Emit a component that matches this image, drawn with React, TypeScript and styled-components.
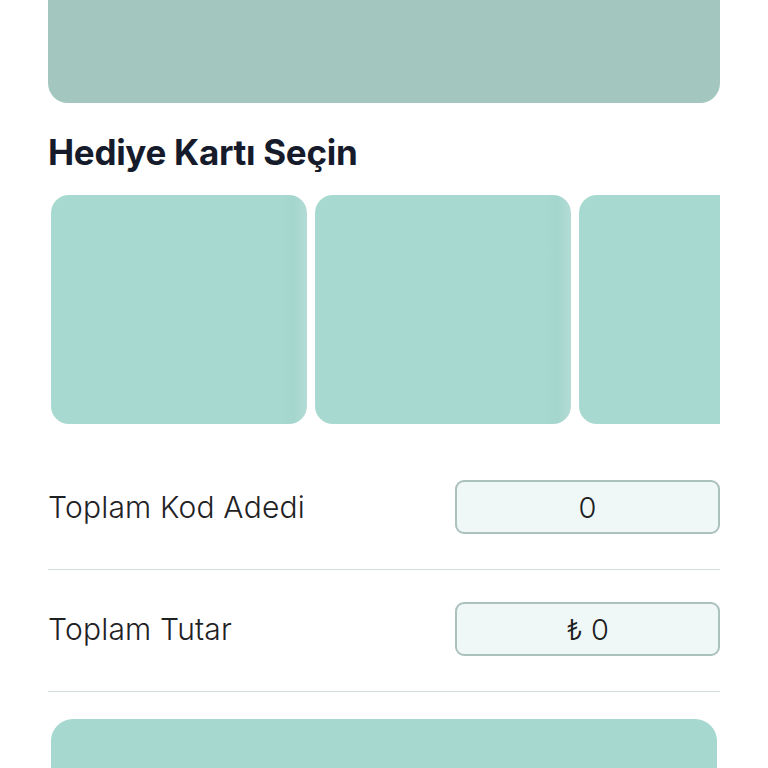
import styled, { createGlobalStyle } from 'styled-components';

const GlobalStyle = createGlobalStyle`
  body {
    margin: 0;
    background: #ffffff;
    font-family: Inter, "Noto Sans", sans-serif;
    color: #1b1f2a;
  }
`;

const cards = [1, 2, 3];

const rows = [
  { label: 'Toplam Kod Adedi', value: '0' },
  { label: 'Toplam Tutar', value: '₺ 0' },
];

export default function App() {
  return (
    <>
      <GlobalStyle />
      <Page>
        <Banner />
        <Title>Hediye Kartı Seçin</Title>
        <CardStrip>
          {cards.map((c) => (
            <GiftCard key={c} />
          ))}
        </CardStrip>
        <Summary>
          {rows.map((row) => (
            <SummaryRow key={row.label}>
              <Label>{row.label}</Label>
              <ValueBox>{row.value}</ValueBox>
            </SummaryRow>
          ))}
        </Summary>
        <SubmitButton />
      </Page>
    </>
  );
}

const Page = styled.div`
  padding: 0 48px;
  height: 768px;
  overflow: hidden;
  display: flex;
  flex-direction: column;
`;

const Banner = styled.div`
  height: 103px;
  flex-shrink: 0;
  background: #a3c7be;
  border-radius: 0 0 20px 20px;
`;

const Title = styled.h2`
  margin: 28px 0 22px;
  font-size: 35px;
  line-height: 1.2;
  font-weight: 700;
  letter-spacing: -0.3px;
  color: #161b2b;
`;

const CardStrip = styled.div`
  display: flex;
  gap: 8px;
  padding-left: 3px;
  overflow: hidden;
  flex-shrink: 0;
`;

const GiftCard = styled.div`
  flex: 0 0 256px;
  height: 229px;
  border-radius: 18px;
  background: linear-gradient(
    to right,
    #a7d9d0 0%,
    #a7d9d0 90%,
    #a5d6cd 95%,
    #b3dcd5 100%
  );
`;

const Summary = styled.div`
  margin-top: 24px;
  display: flex;
  flex-direction: column;
`;

const SummaryRow = styled.div`
  display: flex;
  align-items: center;
  justify-content: space-between;
  padding: 32px 0 35px;
  border-bottom: 1px solid #d5dddc;
`;

const Label = styled.span`
  font-size: 30px;
  font-weight: 300;
  letter-spacing: 0.2px;
  color: #1f2224;
`;

const ValueBox = styled.div`
  width: 265px;
  height: 54px;
  box-sizing: border-box;
  border: 2px solid #aac1bd;
  border-radius: 9px;
  background: #f0f8f7;
  display: flex;
  align-items: center;
  justify-content: center;
  font-size: 29px;
  font-weight: 300;
  color: #1d2022;
`;

const SubmitButton = styled.div`
  margin: 27px 3px 0;
  height: 80px;
  flex-shrink: 0;
  border-radius: 22px;
  background: #a6d8cf;
`;
